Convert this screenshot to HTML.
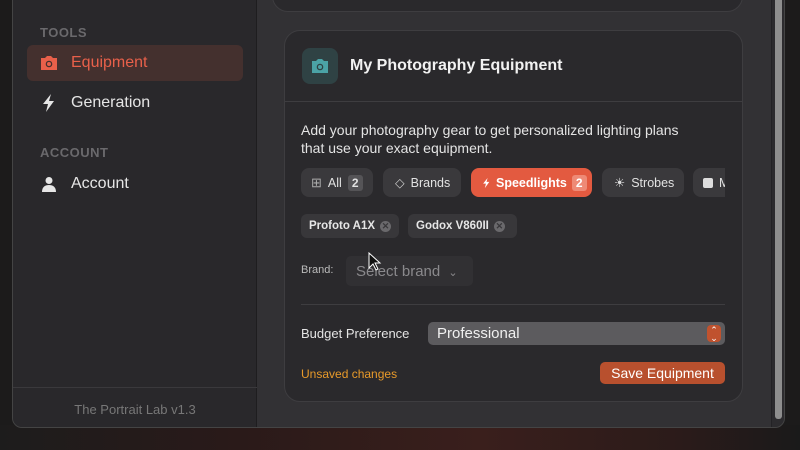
<!DOCTYPE html>
<html><head><meta charset="utf-8"><style>
*{box-sizing:border-box;margin:0;padding:0}
body{width:800px;height:450px;overflow:hidden;background:#1c1b1b;font-family:"Liberation Sans",sans-serif;position:relative}
.bgred{position:absolute;left:0;top:425px;width:800px;height:25px;background:linear-gradient(90deg,#1d1c1c 0%,#2a1a19 30%,#3a1f1c 60%,#2b1b1a 85%,#1a1a1a 100%)}
.win{position:absolute;left:12px;top:-10px;width:773px;height:438px;border-radius:10px;background:#323134;border:1px solid #444;overflow:hidden}
.side{position:absolute;left:0;top:0;width:244px;height:100%;background:#29282b;border-right:1px solid #1e1d1f}
.sec{position:absolute;left:27px;font-size:13px;font-weight:bold;color:#6a696c;letter-spacing:.5px}
.item{position:absolute;left:14px;width:216px;height:36px;border-radius:6px;display:flex;align-items:center;font-size:16px;color:#e6e6e6}
.item svg{position:absolute;left:12px}
.item span{position:absolute;left:44px}
.foot{position:absolute;left:0;top:396px;width:244px;border-top:1px solid #3a393c;height:60px;color:#777;font-size:13px;text-align:center;padding-top:14px}
.card{position:absolute;background:#2a292c;border:1px solid #3e3d40;border-radius:16px}
.chip{position:absolute;top:168px;height:29px;border-radius:8px;background:#3a393c;color:#e2e2e2;font-size:12.5px;display:flex;align-items:center;padding:0 10px;gap:6px;white-space:nowrap}
.chip *{flex-shrink:0}
.badge{background:#555457;border-radius:3px;padding:1px 4px;font-weight:bold;font-size:12px}
.tag{position:absolute;top:214px;height:24px;border-radius:6px;background:#38373a;color:#e6e6e6;font-size:11.5px;font-weight:bold;display:flex;align-items:center;padding:0 8px;gap:5px;white-space:nowrap}
.x{width:11px;height:11px;border-radius:50%;background:#6a696c;color:#38373a;font-size:9px;line-height:11px;text-align:center;flex-shrink:0}
</style></head><body>
<div class="bgred"></div>
<div class="win">
 <div class="side">
  <div class="sec" style="top:34px">TOOLS</div>
  <div class="item" style="top:54px;background:#44302e;color:#e8604a">
   <svg width="20" height="16" viewBox="0 0 20 16"><path d="M2 3h4l2-2h4l2 2h4v12H2z" fill="#e8604a"/><circle cx="10" cy="9" r="3.3" fill="#44302e"/><circle cx="10" cy="9" r="2" fill="#e8604a"/></svg>
   <span>Equipment</span></div>
  <div class="item" style="top:94px">
   <svg width="16" height="18" viewBox="0 0 16 18" style="left:14px"><path d="M10 0L2 10h5l-2 8 8-11H8z" fill="#e6e6e6"/></svg>
   <span>Generation</span></div>
  <div class="sec" style="top:154px">ACCOUNT</div>
  <div class="item" style="top:175px">
   <svg width="16" height="16" viewBox="0 0 16 16" style="left:14px"><circle cx="8" cy="4.5" r="3.5" fill="#e6e6e6"/><path d="M1 16c0-5 3-7 7-7s7 2 7 7z" fill="#e6e6e6"/></svg>
   <span>Account</span></div>
  <div class="foot">The Portrait Lab v1.3</div>
 </div>
 <div style="position:absolute;left:758px;top:0;width:14px;height:100%;background:#2c2b2e;border-left:1px solid #232225"></div>
 <div style="position:absolute;left:762px;top:0;width:7px;height:428px;background:#8e8e8e;border-radius:3px"></div>
</div>
<div class="card" style="left:272px;top:-30px;width:471px;height:42px"></div>
<div class="card" style="left:284px;top:30px;width:459px;height:372px;overflow:hidden">
 <div style="position:absolute;left:17px;top:17px;width:36px;height:36px;border-radius:8px;background:#2f4244">
  <svg width="20" height="16" viewBox="0 0 20 16" style="position:absolute;left:8px;top:10px"><path d="M2 3h4l2-2h4l2 2h4v12H2z" fill="#4ba3a6"/><circle cx="10" cy="9" r="3.3" fill="#2f4244"/><circle cx="10" cy="9" r="2" fill="#4ba3a6"/></svg></div>
 <div style="position:absolute;left:65px;top:26px;font-size:16px;font-weight:bold;color:#f2f2f2">My Photography Equipment</div>
 <div style="position:absolute;left:0;top:70px;width:100%;border-top:1px solid #3e3d40"></div>
 <div style="position:absolute;left:16px;top:90px;font-size:14px;line-height:18px;color:#e4e4e4">Add your photography gear to get personalized lighting plans<br>that use your exact equipment.</div>
</div>
<div style="position:absolute;left:0;top:0;width:725px;height:450px;overflow:hidden">
 <div class="chip" style="left:301px;width:72px"><span style="color:#aaa;font-size:13px">⊞</span>All <span class="badge">2</span></div>
 <div class="chip" style="left:383px;width:78px;padding-left:12px"><span style="color:#ccc">◇</span>Brands</div>
 <div class="chip" style="left:471px;width:121px;background:#e35a40;color:#fff;font-weight:bold;padding-left:11px;gap:5px"><svg width="9" height="12" viewBox="0 0 16 18"><path d="M10 0L2 10h5l-2 8 8-11H8z" fill="#fff"/></svg>Speedlights <span class="badge" style="background:#ee8a76">2</span></div>
 <div class="chip" style="left:602px;width:82px;padding-left:12px"><span style="color:#ddd">☀</span>Strobes</div>
 <div class="chip" style="left:693px;width:60px"><span style="display:inline-block;width:10px;height:10px;background:#ddd;border-radius:2px"></span>M</div>
</div>
<div class="tag" style="left:301px;width:98px">Profoto A1X <span class="x">✕</span></div>
<div class="tag" style="left:408px;width:109px">Godox V860II <span class="x">✕</span></div>
<div style="position:absolute;left:301px;top:264px;font-size:11px;color:#bbb">Brand:</div>
<div style="position:absolute;left:346px;top:256px;width:127px;height:30px;border-radius:5px;background:#313033;color:#8a898c;font-size:15px;padding:7px 10px;white-space:nowrap">Select brand <span style="font-size:11px;margin-left:4px">⌄</span></div>
<svg width="14" height="20" viewBox="0 0 14 20" style="position:absolute;left:368px;top:252px"><path d="M1 1v15l4-4 3 6 2-1-3-6h5z" fill="#111" stroke="#fff" stroke-width="1"/></svg>
<div style="position:absolute;left:301px;top:304px;width:424px;border-top:1px solid #3e3d40"></div>
<div style="position:absolute;left:301px;top:326px;font-size:13px;color:#e4e4e4">Budget Preference</div>
<div style="position:absolute;left:428px;top:322px;width:297px;height:23px;border-radius:5px;background:#5c5b5e;color:#f0f0f0;font-size:15px;padding:3px 9px">Professional
 <div style="position:absolute;right:4px;top:3px;width:14px;height:17px;border-radius:4px;background:#c0522e;color:#fff;font-size:9px;line-height:8px;text-align:center;padding-top:1px">⌃<br>⌄</div></div>
<div style="position:absolute;left:301px;top:367px;font-size:12px;color:#e89a2a">Unsaved changes</div>
<div style="position:absolute;left:600px;top:362px;width:125px;height:22px;border-radius:5px;background:#b8502e;color:#fff;font-size:14px;text-align:center;line-height:22px">Save Equipment</div>
</body></html>
